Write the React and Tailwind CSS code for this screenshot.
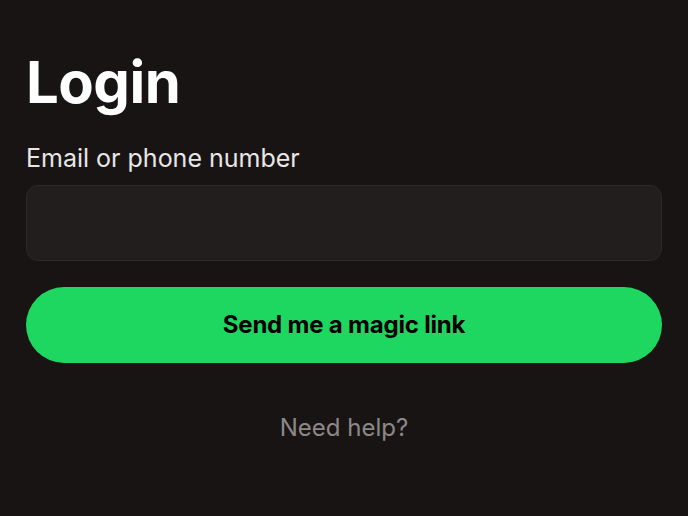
export default function App() {
  return (
    <div
      className="min-h-screen w-full bg-[#191414] px-[26px] pt-[46px] text-white"
      style={{ fontFamily: "Inter, 'Noto Sans', sans-serif" }}
    >
      <h1 className="text-[58px] font-bold leading-[72px] tracking-[-0.5px]">Login</h1>

      <label className="mt-[24px] block text-[25px] leading-[32px] text-[#e8e6e6]">
        Email or phone number
      </label>
      <input
        type="text"
        className="mt-[11px] block h-[76px] w-full rounded-[12px] border border-[#2c2828] bg-[#221e1e] px-5 text-[22px] text-white outline-none"
      />

      <button className="mt-[26px] flex h-[76px] w-full items-center justify-center rounded-full bg-[#1ed760] text-[24px] font-bold tracking-[-0.2px] text-black">
        Send me a magic link
      </button>

      <div className="mt-[47px] text-center text-[24px] text-[#8d8888]">Need help?</div>
    </div>
  );
}
